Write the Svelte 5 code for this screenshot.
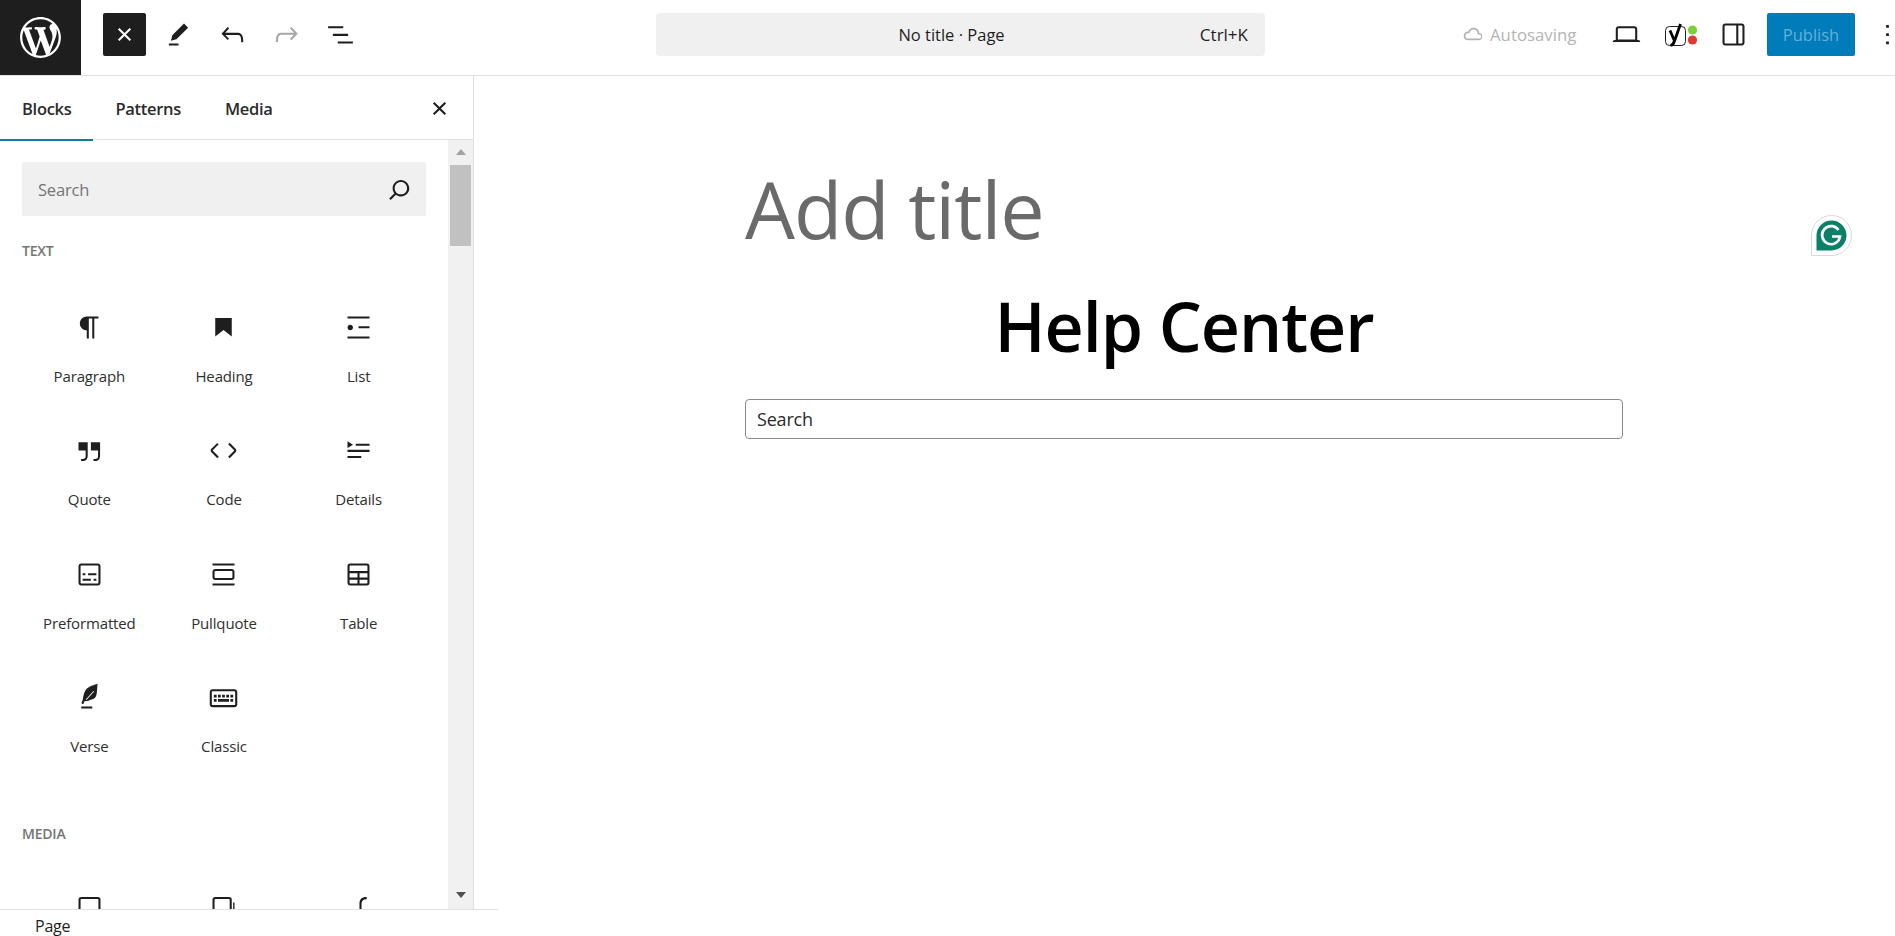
<script>
  const icons = {
    close: "M12 13.06l3.712 3.713 1.061-1.06L13.061 12l3.712-3.712-1.06-1.06L12 10.938 8.288 7.227l-1.061 1.06L10.939 12l-3.712 3.712 1.06 1.061L12 13.061z",
    edit: "m19 7-3-3-8.5 8.5-1 4 4-1L19 7Zm-7 11.5H5V20h7v-1.5Z",
    undo: "M18.3 11.7c-.6-.6-1.4-.9-2.3-.9H6.7l2.9-3.3-1.1-1-4.5 5L8.5 16l1-1-2.7-2.7H16c.5 0 .9.2 1.3.5 1 1 1 3.4 1 4.5v.3h1.5v-.2c0-1.5 0-4.3-1.5-5.7z",
    redo: "M15.6 6.5l-1.1 1 2.9 3.3H8c-.9 0-1.7.3-2.3.9-1.4 1.5-1.4 4.2-1.4 5.6v.2h1.5v-.3c0-1.1 0-3.5 1-4.5.3-.3.7-.5 1.3-.5h9.2L14.5 15l1.1 1.1 4.6-4.6-4.6-5z",
    listView: "M3 6h11v1.5H3V6Zm3.5 5.5h11V13h-11v-1.5ZM21 17H10v1.5h11V17Z",
    search: "M13 5c-3.3 0-6 2.7-6 6 0 1.4.5 2.7 1.3 3.7l-3.8 3.8 1.1 1.1 3.8-3.8c1 .8 2.3 1.3 3.7 1.3 3.3 0 6-2.7 6-6S16.3 5 13 5zm0 10.5c-2.5 0-4.5-2-4.5-4.5s2-4.5 4.5-4.5 4.5 2 4.5 4.5-2 4.5-4.5 4.5z",
    laptop: "M20.5 16h-.7V8c0-1.1-.9-2-2-2H6.2c-1.1 0-2 .9-2 2v8h-.7c-.8 0-1.5.7-1.5 1.5h20c0-.8-.7-1.5-1.5-1.5zM5.7 8c0-.3.2-.5.5-.5h11.6c.3 0 .5.2.5.5v7.6H5.7V8z",
    drawer: "M18 4H6c-1.1 0-2 .9-2 2v12c0 1.1.9 2 2 2h12c1.1 0 2-.9 2-2V6c0-1.1-.9-2-2-2zm-4 14.5H6c-.3 0-.5-.2-.5-.5V6c0-.3.2-.5.5-.5h8v13zm4.5-.5c0 .3-.2.5-.5.5h-2.5v-13H18c.3 0 .5.2.5.5v12z",
    more: "M13 19h-2v-2h2v2zm0-6h-2v-2h2v2zm0-6h-2V5h2v2z",
    cloud: "M17.3 10.1c0-2.5-2.1-4.4-4.8-4.4-2.2 0-4.1 1.4-4.6 3.3h-.2C5.7 9 4 10.7 4 12.8c0 2.1 1.7 3.8 3.7 3.8h9c1.8 0 3.3-1.5 3.3-3.3 0-1.8-1.5-3.2-3.7-3.2zm-.6 5h-9c-1.2 0-2.2-1-2.2-2.3 0-1.2 1-2.3 2.2-2.3h1.3l.3-1.1c.3-1.3 1.6-2.2 3.2-2.2 1.8 0 3.3 1.3 3.3 2.9v1.3l1.3.1c.9 0 1.9.7 1.9 1.7s-.8 1.9-1.9 1.9z"
  };

  const textBlocks = [
    { name: "Paragraph", d: "m9.99609 14v-.2251l.00391.0001v6.225h1.5v-14.5h2.5v14.5h1.5v-14.5h3v-1.5h-8.50391c-2.76142 0-5 2.23858-5 5 0 2.7614 2.23858 5 5 5z" },
    { name: "Heading", d: "M6 5V18.5911L12 13.8473L18 18.5911V5H6Z" },
    { name: "List", d: "M4 4v1.5h16V4H4zm8 8.5h8V11h-8v1.5zM4 20h16v-1.5H4V20zm4-8c0-1.1-.9-2-2-2s-2 .9-2 2 .9 2 2 2 2-.9 2-2z" },
    { name: "Quote", d: "M13 6v6h5.2v4c0 .8-.2 1.4-.5 1.7-.6.6-1.6.6-2.5.5h-.3v1.5h.5c1 0 2.3-.1 3.3-1 .6-.6 1-1.6 1-2.8V6H13zm-9 6h5.2v4c0 .8-.2 1.4-.5 1.7-.6.6-1.6.6-2.5.5h-.3v1.5h.5c1 0 2.3-.1 3.3-1 .6-.6 1-1.6 1-2.8V6H4v6z" },
    { name: "Code", d: "M20.8 10.7l-4.3-4.3-1.1 1.1 4.3 4.3c.1.1.1.3 0 .4l-4.3 4.3 1.1 1.1 4.3-4.3c.7-.8.7-1.9 0-2.6zM4.2 11.8l4.3-4.3-1-1-4.3 4.3c-.7.7-.7 1.8 0 2.5l4.3 4.3 1.1-1.1-4.3-4.3c-.2-.1-.2-.3-.1-.4z" },
    { name: "Details", d: "M4 16h10v1.5H4V16Zm0-4.5h16V13H4v-1.5ZM10 7h10v1.5H10V7Zm-6-1.75 4 2.5-4 2.5v-5Z" },
    { name: "Preformatted", d: "M18 4H6c-1.1 0-2 .9-2 2v12c0 1.1.9 2 2 2h12c1.1 0 2-.9 2-2V6c0-1.1-.9-2-2-2zm.5 14c0 .3-.2.5-.5.5H6c-.3 0-.5-.2-.5-.5V6c0-.3.2-.5.5-.5h12c.3 0 .5.2.5.5v12zM7 16.5h6V15H7v1.5zm4-4h6V11h-6v1.5zM9 11H7v1.5h2V11zm6 5.5h2V15h-2v1.5z" },
    { name: "Pullquote", d: "M18 8H6c-1.1 0-2 .9-2 2v4c0 1.1.9 2 2 2h12c1.1 0 2-.9 2-2v-4c0-1.1-.9-2-2-2zm.5 6c0 .3-.2.5-.5.5H6c-.3 0-.5-.2-.5-.5v-4c0-.3.2-.5.5-.5h12c.3 0 .5.2.5.5v4zM4 4v1.5h16V4H4zm0 16h16v-1.5H4V20z" },
    { name: "Table", d: "M18 4H6a2 2 0 0 0-2 2v12c0 1.1.9 2 2 2h12a2 2 0 0 0 2-2V6a2 2 0 0 0-2-2Zm.5 2v3.5h-13V6c0-.3.2-.5.5-.5h12c.3 0 .5.2.5.5ZM5.5 14.25V11h5.75v3.25H5.5Zm0 3.75v-2.25h5.75v2.75H6a.5.5 0 0 1-.5-.5Zm12.5.5h-5.25v-2.75h5.75V18c0 .3-.2.5-.5.5Zm.5-4.25h-5.75V11h5.75v3.25Z" },
    { name: "Verse", d: "M17.8 2l-.9.3c-.1 0-3.6 1-5.2 2.1C10 5.5 9.3 6.5 8.9 7.1c-.6.9-1.7 4.7-1.7 6.3l-.9 2.3c-.2.4 0 .8.4 1 .1 0 .2.1.3.1.3 0 .6-.2.7-.5l.6-1.5c.3 0 .7-.1 1.2-.2.7-.1 1.4-.3 2.2-.5.8-.2 1.6-.5 2.4-.8.7-.3 1.4-.7 1.9-1.2s.8-1.2 1-1.9c.2-.7.3-1.6.4-2.4.1-.8.1-1.7.2-2.5 0-.8.1-1.5.2-2.1V2zM9.3 13.4l5.6-6.2.5.4-5.6 6.2-.5-.4zM6 20h8v-1.5H6V20z" },
    { name: "Classic", d: "M20 6H4c-1.1 0-2 .9-2 2v9c0 1.1.9 2 2 2h16c1.1 0 2-.9 2-2V8c0-1.1-.9-2-2-2zm.5 11c0 .3-.2.5-.5.5H4c-.3 0-.5-.2-.5-.5V8c0-.3.2-.5.5-.5h16c.3 0 .5.2.5.5v9zM10 10H8v2h2v-2zm-5 2h2v-2H5v2zm8-2h-2v2h2v-2zm-5 5h8v-2H8v2zm6-3h2v-2h-2v2zm3 0h2v-2h-2v2zm0 3h2v-2h-2v2zM5 15h2v-2H5v2z" }
  ];

  // only the tops of these show above the footer, their labels are below the fold
  const mediaBlocks = [
    { name: "Image", d: "M18 5H6a2 2 0 0 0-2 2v12h1.5V7c0-.3.2-.5.5-.5h12c.3 0 .5.2.5.5v12H20V7a2 2 0 0 0-2-2Z" },
    { name: "Gallery", d: "M16 5H6a2 2 0 0 0-2 2v12h1.5V7c0-.3.2-.5.5-.5h10c.3 0 .5.2.5.5v12H18V7a2 2 0 0 0-2-2Zm4 4h-1v10h1V9Z" },
    { name: "Audio", d: "M18 5.2c-3-.3-5.3 1-5.3 5V19h1.5v-8.8c0-2.5 1.5-3.7 3.8-3.5V5.2Z" }
  ];

  const tabs = ["Blocks", "Patterns", "Media"];
</script>

<div class="editor">
  <header class="topbar">
    <div class="logo">
      <svg viewBox="-2 -2 24 24" width="49" height="49"><path d="M20 10c0-5.51-4.49-10-10-10C4.48 0 0 4.49 0 10c0 5.52 4.48 10 10 10 5.51 0 10-4.48 10-10zM7.78 15.37L4.37 6.22c.55-.02 1.17-.08 1.17-.08.5-.06.44-1.13-.06-1.11 0 0-1.45.11-2.37.11-.18 0-.37 0-.58-.01C4.12 2.69 6.87 1.11 10 1.11c2.33 0 4.45.87 6.05 2.34-.68-.11-1.65.39-1.65 1.58 0 .74.45 1.36.9 2.1.35.61.55 1.36.55 2.46 0 1.49-1.4 5-1.4 5l-3.03-8.37c.54-.02.82-.17.82-.17.5-.05.44-1.25-.06-1.22 0 0-1.44.12-2.38.12-.87 0-2.33-.12-2.33-.12-.5-.03-.56 1.2-.06 1.22l.92.08 1.26 3.41zM17.41 10c.24-.64.74-1.87.43-4.25.7 1.29 1.05 2.71 1.05 4.25 0 3.29-1.73 6.24-4.4 7.78.97-2.59 1.94-5.2 2.92-7.78zM6.1 18.09C3.12 16.65 1.11 13.53 1.11 10c0-1.3.23-2.48.72-3.59C3.25 10.3 4.67 14.2 6.1 18.09zm4.03-6.63l2.58 6.98c-.86.29-1.76.45-2.71.45-.79 0-1.57-.11-2.29-.33.81-2.38 1.62-4.74 2.42-7.1z"/></svg>
    </div>

    <div class="tools">
      <button class="tool dark" aria-label="Close">
        <svg viewBox="0 0 24 24" width="33" height="33"><path d={icons.close}/></svg>
      </button>
      <button class="tool" aria-label="Tools">
        <svg viewBox="0 0 24 24" width="33" height="33"><path d={icons.edit}/></svg>
      </button>
      <button class="tool" aria-label="Undo">
        <svg viewBox="0 0 24 24" width="33" height="33"><path d={icons.undo}/></svg>
      </button>
      <button class="tool faded" aria-label="Redo">
        <svg viewBox="0 0 24 24" width="33" height="33"><path d={icons.redo}/></svg>
      </button>
      <button class="tool" aria-label="List view">
        <svg viewBox="0 0 24 24" width="33" height="33"><path d={icons.listView}/></svg>
      </button>
    </div>

    <div class="command">
      <span class="command-title">No title · Page</span>
      <span class="command-key">Ctrl+K</span>
    </div>

    <div class="actions">
      <div class="saving">
        <svg viewBox="0 0 24 24" width="28" height="28"><path d={icons.cloud}/></svg>
        <span>Autosaving</span>
      </div>
      <svg class="laptop" viewBox="0 0 24 24" width="33" height="33"><path d={icons.laptop}/></svg>
      <svg class="yoast" viewBox="0 0 33 24" width="33" height="24">
        <rect x="0.5" y="3.5" width="20" height="19" rx="4" fill="none" stroke="#1e1e1e" stroke-width="1"/>
        <path d="M5 7.5 9.5 18M15.5 1 9.5 18c-.8 2.5-2 4-4 4.5" fill="none" stroke="#000" stroke-width="2.8"/>
        <circle cx="27.5" cy="7" r="4.6" fill="#7ad03a"/>
        <circle cx="27.5" cy="17" r="4.6" fill="#e2382f"/>
      </svg>
      <svg class="drawer" viewBox="0 0 24 24" width="33" height="33"><path d={icons.drawer}/></svg>
      <button class="publish">Publish</button>
      <svg class="more" viewBox="0 0 24 24" width="33" height="33"><path d={icons.more}/></svg>
    </div>
  </header>

  <div class="main">
    <aside class="sidebar">
      <div class="tabs">
        {#each tabs as tab, i}
          <div class="tab" class:active={i === 0}>{tab}</div>
        {/each}
        <svg class="tabs-close" viewBox="0 0 24 24" width="33" height="33"><path d={icons.close}/></svg>
      </div>

      <div class="panel">
        <div class="panel-content">
          <div class="search">
            <span>Search</span>
            <svg viewBox="0 0 24 24" width="33" height="33"><path d={icons.search}/></svg>
          </div>

          <h2 class="group-title">TEXT</h2>
          <div class="block-grid">
            {#each textBlocks as block}
              <div class="block">
                <svg viewBox="0 0 24 24" width="33" height="33"><path fill-rule="evenodd" d={block.d}/></svg>
                <span>{block.name}</span>
              </div>
            {/each}
          </div>

          <h2 class="group-title media">MEDIA</h2>
          <div class="block-grid media-grid">
            {#each mediaBlocks as block}
              <div class="block" aria-label={block.name}>
                <svg viewBox="0 0 24 24" width="33" height="33"><path d={block.d}/></svg>
              </div>
            {/each}
          </div>
        </div>

        <div class="scrollbar">
          <div class="arrow up"></div>
          <div class="thumb"></div>
          <div class="arrow down"></div>
        </div>
      </div>
    </aside>

    <main class="canvas">
      <div class="page">
        <h1 class="post-title">Add title</h1>
        <h2 class="heading">Help Center</h2>
        <div class="page-search">Search</div>
      </div>
    </main>
  </div>

  <footer class="footer">
    <div class="crumb">Page</div>
  </footer>

  <div class="grammarly">
    <svg viewBox="0 0 41 41" width="41" height="41">
      <path d="M20.5.5a20 20 0 0 1 0 40H.5v-20a20 20 0 0 1 20-20Z" fill="#fff" stroke="#d5d8e0"/>
      <path d="M20.5 5.5a15 15 0 0 1 0 30h-15v-15a15 15 0 0 1 15-15Z" fill="#0b8069"/>
      <path d="M27.5 15a9 9 0 1 0 1.5 6.5h-8" fill="none" stroke="#fff" stroke-width="2.6"/>
    </svg>
  </div>
</div>

<style>
  :global(body) {
    margin: 0;
    background: #fff;
    overflow: hidden;
  }

  * {
    box-sizing: border-box;
  }

  .editor {
    position: relative;
    display: flex;
    flex-direction: column;
    height: 936px;
    font-family: "Open Sans", "Noto Sans", sans-serif;
    color: #1e1e1e;
    overflow: hidden;
  }

  svg {
    display: block;
    fill: #1e1e1e;
    flex-shrink: 0;
  }

  button {
    border: 0;
    padding: 0;
    background: none;
    font: inherit;
  }

  .topbar {
    display: flex;
    align-items: center;
    height: 76px;
    flex-shrink: 0;
    border-bottom: 1px solid #e0e0e0;
  }

  .logo {
    display: flex;
    align-items: center;
    justify-content: center;
    width: 81px;
    height: 75px;
    flex-shrink: 0;
    background: #1e1e1e;
  }

  .logo svg {
    fill: #fff;
  }

  .tools {
    display: flex;
    align-items: center;
    gap: 11px;
    width: 575px;
    flex-shrink: 0;
    padding-left: 22px;
    margin-bottom: 6px;
  }

  .tool {
    display: flex;
    align-items: center;
    justify-content: center;
    width: 43px;
    height: 43px;
    border-radius: 2px;
  }

  .tool.dark {
    background: #1e1e1e;
  }

  .tool.dark svg {
    fill: #fff;
  }

  .tool.faded svg {
    fill: #a7a7a7;
  }

  .command {
    display: flex;
    align-items: center;
    position: relative;
    justify-content: center;
    width: 609px;
    height: 43px;
    flex-shrink: 0;
    margin-bottom: 6px;
    padding-right: 18px;
    background: #f0f0f0;
    border-radius: 4px;
    font-size: 16.5px;
  }

  .command-key {
    position: absolute;
    right: 17px;
    font-size: 17px;
  }

  .actions {
    display: flex;
    align-items: center;
    flex: 1;
    margin-bottom: 6px;
    padding-left: 194px;
  }

  .saving {
    display: flex;
    align-items: center;
    gap: 3px;
    width: 151px;
    flex-shrink: 0;
    color: #b4b4b4;
    font-size: 16.8px;
  }

  .saving svg {
    fill: #b4b4b4;
  }

  .laptop {
    margin-right: 22px;
  }

  .yoast {
    margin-right: 19px;
  }

  .publish {
    width: 88px;
    height: 43px;
    flex-shrink: 0;
    margin-left: 17px;
    border-radius: 2px;
    background: #007cba;
    color: #62b1dc;
    font-size: 16.5px;
  }

  .more {
    margin-left: 16px;
  }

  .main {
    display: flex;
    flex: 1;
    min-height: 0;
  }

  .sidebar {
    display: flex;
    flex-direction: column;
    width: 474px;
    flex-shrink: 0;
    border-right: 1px solid #e0e0e0;
  }

  .tabs {
    position: relative;
    display: flex;
    height: 64px;
    flex-shrink: 0;
    border-bottom: 1px solid #e0e0e0;
  }

  .tab {
    display: flex;
    align-items: center;
    height: 65px;
    padding: 0 22px 1px;
    font-size: 16.5px;
    font-weight: 600;
    letter-spacing: -0.3px;
    color: #2b2b2b;
  }

  .tab.active {
    box-shadow: inset 0 -2px 0 #117ba8;
  }

  .tabs-close {
    position: absolute;
    right: 17px;
    top: 16px;
  }

  .panel {
    display: flex;
    flex: 1;
    min-height: 0;
  }

  .panel-content {
    flex: 1;
    min-width: 0;
    padding: 22px 22px 0;
    overflow: hidden;
  }

  .search {
    display: flex;
    align-items: center;
    justify-content: space-between;
    height: 54px;
    padding: 0 10px 0 16px;
    background: #f0f0f0;
    border-radius: 2px;
    color: #757575;
    font-size: 16.5px;
    letter-spacing: -0.2px;
  }

  .group-title {
    margin: 25px 0 0;
    height: 20px;
    line-height: 20px;
    font-size: 14px;
    font-weight: 600;
    letter-spacing: -0.2px;
    color: #757575;
  }

  .group-title.media {
    margin-top: 40px;
  }

  .block-grid {
    display: grid;
    grid-template-columns: repeat(3, 1fr);
    grid-auto-rows: 123.33px;
    padding-top: 30px;
  }

  .block-grid.media-grid {
    padding-top: 26px;
  }

  .block {
    display: flex;
    flex-direction: column;
    align-items: center;
    padding-top: 20px;
    gap: 22px;
  }

  .block span {
    font-size: 15px;
    line-height: 20px;
    letter-spacing: -0.15px;
    color: #2f2f2f;
  }

  .scrollbar {
    position: relative;
    display: flex;
    flex-direction: column;
    align-items: center;
    width: 25px;
    flex-shrink: 0;
    background: #f1f1f1;
  }

  .arrow {
    width: 0;
    height: 0;
    border-left: 5px solid transparent;
    border-right: 5px solid transparent;
  }

  .arrow.up {
    margin-top: 9px;
    border-bottom: 6px solid #a3a3a3;
  }

  .arrow.down {
    margin-top: auto;
    margin-bottom: 11px;
    border-top: 6px solid #505050;
  }

  .thumb {
    width: 21px;
    height: 81px;
    margin-top: 10px;
    background: #c1c1c1;
  }

  .canvas {
    flex: 1;
    min-width: 0;
    padding-right: 1px;
  }

  .page {
    width: 878px;
    margin: 0 auto;
    padding-top: 83px;
  }

  .post-title {
    margin: 0;
    font-size: 79px;
    line-height: 100px;
    font-weight: 400;
    color: #6a6a6a;
    letter-spacing: -1px;
  }

  .heading {
    margin: 0;
    padding-top: 22px;
    text-align: center;
    font-size: 68px;
    line-height: 90px;
    font-weight: 600;
    letter-spacing: -1px;
    color: #000;
  }

  .page-search {
    display: flex;
    align-items: center;
    height: 40px;
    margin-top: 28px;
    padding-left: 11px;
    border: 1px solid #8a8a8a;
    border-radius: 4px;
    font-size: 18px;
    letter-spacing: -0.2px;
    color: #2b2b2b;
  }

  .footer {
    height: 27px;
    flex-shrink: 0;
  }

  .crumb {
    width: 498px;
    height: 27px;
    padding-left: 35px;
    border-top: 1px solid #e0e0e0;
    font-size: 16px;
    line-height: 33px;
    letter-spacing: -0.2px;
    color: #1e1e1e;
  }

  .grammarly {
    position: absolute;
    left: 1811px;
    top: 215px;
  }

  .grammarly svg {
    fill: none;
  }
</style>
